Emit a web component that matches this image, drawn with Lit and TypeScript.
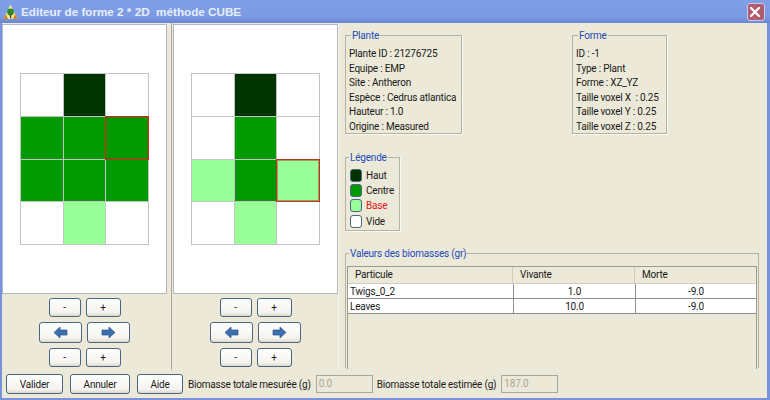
import { LitElement, html, css, svg } from 'lit';
import { customElement } from 'lit/decorators.js';

type Cell = 'w' | 'd' | 'g' | 'l';

const COLORS: Record<Cell, string> = { w: '#ffffff', d: '#003300', g: '#009900', l: '#99ff99' };

const LEFT_GRID: Cell[] = ['w', 'd', 'w', 'g', 'g', 'g', 'g', 'g', 'g', 'w', 'l', 'w'];
const RIGHT_GRID: Cell[] = ['w', 'd', 'w', 'w', 'g', 'w', 'l', 'g', 'l', 'w', 'l', 'w'];

const arrowLeft = svg`<polygon points="1,6.5 7,1 7,4 14,4 14,9 7,9 7,12" fill="#3d6fae" stroke="#2a5590" stroke-width="0.7"/>`;
const arrowRight = svg`<polygon points="14,6.5 8,1 8,4 1,4 1,9 8,9 8,12" fill="#3d6fae" stroke="#2a5590" stroke-width="0.7"/>`;

@customElement('app-root')
export class AppRoot extends LitElement {
  static styles = css`
    :host {
      display: block;
      width: 770px;
      height: 400px;
      overflow: hidden;
      font-family: Roboto, 'Liberation Sans', Arial, sans-serif;
      font-size: 10px;
      letter-spacing: -0.2px;
      color: #1a1a1a;
    }
    .window {
      display: flex;
      flex-direction: column;
      height: 400px;
      box-sizing: border-box;
      background: #7892dc;
      padding: 0 3px 2px 2px;
    }
    .titlebar {
      display: flex;
      align-items: center;
      height: 23px;
      flex: none;
      margin: 0 -3px 0 -2px;
      padding: 0 5px 0 3px;
      background: linear-gradient(#7f9fe6, #7d9be3 70%, #6a86d4);
      color: #e6edff;
      font-family: 'Liberation Sans', Arial, sans-serif;
      font-size: 11.7px;
      letter-spacing: 0;
      font-weight: bold;
      white-space: pre;
    }
    .titlebar svg {
      flex: none;
      margin-right: 3px;
    }
    .titlebar .title {
      flex: 1;
    }
    .close {
      display: flex;
      align-items: center;
      justify-content: center;
      width: 16px;
      height: 16px;
      background: #b25c6e;
      border: 1px solid #c5cdec;
      border-radius: 3px;
    }
    .content {
      flex: 1;
      display: flex;
      flex-direction: column;
      background: #ece9d8;
      min-height: 0;
    }
    .main {
      flex: 1;
      display: flex;
      min-height: 0;
    }
    .pane {
      width: 165px;
      flex: none;
      display: flex;
      flex-direction: column;
      align-items: center;
    }
    .divider {
      width: 4px;
      flex: none;
      margin-right: 1px;
      border-right: 1px solid #aca899;
    }
    .canvas {
      box-sizing: border-box;
      width: 165px;
      height: 270px;
      margin-top: 1px;
      background: #ffffff;
      border: 1px solid #b0b8c8;
      display: flex;
      align-items: center;
      justify-content: center;
      flex: none;
    }
    .grid {
      display: grid;
      grid-template-columns: 43px 42px 43px;
      grid-template-rows: 43px 43px 42px 43px;
      border-top: 1px solid #c4c4c4;
      border-left: 1px solid #c4c4c4;
    }
    .cell {
      box-sizing: border-box;
      border-right: 1px solid #c4c4c4;
      border-bottom: 1px solid #c4c4c4;
    }
    .cell.sel {
      position: relative;
    }
    .cell.sel::after {
      content: '';
      position: absolute;
      inset: -1px;
      border: 1px solid #b8381c;
      box-shadow: inset 0 0 0 1px rgba(160, 60, 20, 0.5);
      z-index: 1;
    }
    .controls {
      display: flex;
      flex-direction: column;
      align-items: center;
      gap: 5px;
      margin-top: 4px;
    }
    .row {
      display: flex;
      gap: 5px;
    }
    button {
      box-sizing: border-box;
      font: inherit;
      letter-spacing: inherit;
      color: #1a1a1a;
      padding: 0;
      border: 1px solid #4a6684;
      border-radius: 3px;
      background: linear-gradient(#ffffff, #f4f3ee 80%, #dcd8c8);
      display: flex;
      align-items: center;
      justify-content: center;
    }
    .small {
      height: 19px;
      width: 32px;
    }
    .small.wide {
      width: 35px;
    }
    .arrow {
      height: 21px;
      width: 43px;
    }
    .side {
      flex: 1;
      min-width: 0;
      box-sizing: border-box;
      padding: 6px 8px 0 6px;
      display: grid;
      grid-template-columns: 227px 95px 1fr;
      grid-template-rows: 105px auto auto;
      align-content: start;
      border-left: 1px solid #f7f5ec;
    }
    fieldset {
      margin: 0;
      padding: 0;
      border: 1px solid #b4b2a4;
      box-shadow: 1px 1px 0 #fbfaf4;
      min-width: 0;
      box-sizing: border-box;
    }
    legend {
      color: #2349b8;
      padding: 0 1px;
      margin-left: 3px;
      line-height: 13px;
    }
    .plante {
      width: 117px;
      height: 105px;
    }
    .plante legend,
    .forme legend {
      margin-left: 5px;
    }
    .forme {
      height: 105px;
    }
    .info {
      padding: 5px 0 0 3px;
      line-height: 14.5px;
      white-space: pre;
    }
    .legende {
      grid-column: 1;
      grid-row: 2;
      width: 55px;
      height: 80px;
      margin-top: 17px;
    }
    .legend-items {
      display: flex;
      flex-direction: column;
      gap: 3px;
      padding: 5px 0 0 4px;
    }
    .legend-item {
      display: flex;
      align-items: center;
      gap: 4px;
      height: 12.4px;
    }
    .swatch {
      box-sizing: border-box;
      width: 12px;
      height: 13px;
      border: 1px solid #4a6684;
      border-radius: 3px;
      flex: none;
    }
    .base {
      color: #e01818;
    }
    .valeurs {
      grid-column: 1 / -1;
      grid-row: 3;
      height: 121px;
      margin-top: 16px;
      border-bottom: none;
      box-shadow: none;
    }
    .table {
      margin: 6px 1px 0 1px;
      height: 102px;
      border-left: 1px solid #9a9a90;
      border-right: 1px solid #9a9a90;
      border-top: 1px solid #9a9a90;
    }
    .thead,
    .tr {
      display: grid;
      grid-template-columns: 165px 122px 1fr;
    }
    .thead {
      height: 17px;
      line-height: 16px;
      box-sizing: border-box;
      border-bottom: 1px solid #d0cdbc;
    }
    .th {
      padding-left: 7px;
      border-right: 1px solid #cfccbc;
    }
    .th:last-child {
      border-right: none;
    }
    .tr {
      height: 15px;
      line-height: 15px;
      background: #ffffff;
      box-sizing: border-box;
      border-bottom: 1px solid #8f8f8f;
    }
    .td {
      text-align: center;
      border-left: 1px solid #8f8f8f;
    }
    .td.first {
      text-align: left;
      border-left: none;
      padding-left: 2px;
    }
    .bottom {
      flex: none;
      height: 28px;
      display: flex;
      align-items: center;
      padding-left: 4px;
    }
    .bottom button {
      height: 20px;
      margin-right: 7px;
    }
    .field {
      box-sizing: border-box;
      width: 57px;
      height: 18px;
      line-height: 16px;
      padding-left: 2px;
      margin: 0 4px 0 5px;
      border: 1px solid #a8a8a0;
      color: #a8a698;
    }
  `;

  private renderGrid(cells: Cell[], selected: number) {
    return html`
      <div class="canvas">
        <div class="grid">
          ${cells.map(
            (c, i) =>
              html`<div class="cell ${i === selected ? 'sel' : ''}" style="background:${COLORS[c]}"></div>`,
          )}
        </div>
      </div>
    `;
  }

  private renderControls() {
    return html`
      <div class="controls">
        <div class="row">
          <button class="small">-</button>
          <button class="small wide">+</button>
        </div>
        <div class="row">
          <button class="arrow"><svg width="15" height="13">${arrowLeft}</svg></button>
          <button class="arrow"><svg width="15" height="13">${arrowRight}</svg></button>
        </div>
        <div class="row">
          <button class="small">-</button>
          <button class="small wide">+</button>
        </div>
      </div>
    `;
  }

  render() {
    return html`
      <div class="window">
        <div class="titlebar">
          <svg width="15" height="16" viewBox="0 0 15 16">
            <polygon points="7.5,0.5 14.5,15 0.5,15" fill="#f4ec9c" />
            <polygon points="0.5,15 3,10 5,15" fill="#d8801c" />
            <polygon points="14.5,15 12,10 10,15" fill="#d8801c" />
            <circle cx="7.5" cy="8" r="3.4" fill="#2c8a2c" />
            <rect x="6.9" y="10.5" width="1.4" height="4" fill="#5a4a20" />
          </svg>
          <span class="title">Editeur de forme 2 * 2D  méthode CUBE</span>
          <div class="close">
            <svg width="12" height="12" viewBox="0 0 12 12">
              <path d="M2 2 L10 10 M10 2 L2 10" stroke="#ffffff" stroke-width="2.2" stroke-linecap="round" />
            </svg>
          </div>
        </div>
        <div class="content">
          <div class="main">
            <div class="pane">${this.renderGrid(LEFT_GRID, 5)}${this.renderControls()}</div>
            <div class="divider"></div>
            <div class="pane">${this.renderGrid(RIGHT_GRID, 8)}${this.renderControls()}</div>
            <div class="side">
              <fieldset class="plante">
                <legend>Plante</legend>
                <div class="info">Plante ID : 21276725
Equipe : EMP
Site : Antheron
Espèce : Cedrus atlantica
Hauteur : 1.0
Origine : Measured</div>
              </fieldset>
              <fieldset class="forme">
                <legend>Forme</legend>
                <div class="info">ID : -1
Type : Plant
Forme : XZ_YZ
Taille voxel X  : 0.25
Taille voxel Y : 0.25
Taille voxel Z : 0.25</div>
              </fieldset>
              <fieldset class="legende">
                <legend>Légende</legend>
                <div class="legend-items">
                  <div class="legend-item"><span class="swatch" style="background:${COLORS.d}"></span>Haut</div>
                  <div class="legend-item"><span class="swatch" style="background:${COLORS.g}"></span>Centre</div>
                  <div class="legend-item base"><span class="swatch" style="background:${COLORS.l}"></span>Base</div>
                  <div class="legend-item"><span class="swatch" style="background:${COLORS.w}"></span>Vide</div>
                </div>
              </fieldset>
              <fieldset class="valeurs">
                <legend>Valeurs des biomasses (gr)</legend>
                <div class="table">
                  <div class="thead">
                    <div class="th">Particule</div>
                    <div class="th">Vivante</div>
                    <div class="th">Morte</div>
                  </div>
                  <div class="tr">
                    <div class="td first">Twigs_0_2</div>
                    <div class="td">1.0</div>
                    <div class="td">-9.0</div>
                  </div>
                  <div class="tr">
                    <div class="td first">Leaves</div>
                    <div class="td">10.0</div>
                    <div class="td">-9.0</div>
                  </div>
                </div>
              </fieldset>
            </div>
          </div>
          <div class="bottom">
            <button style="width:57px">Valider</button>
            <button style="width:60px">Annuler</button>
            <button style="width:46px;margin-right:5px">Aide</button>
            <span>Biomasse totale mesurée (g)</span>
            <div class="field">0.0</div>
            <span>Biomasse totale estimée (g)</span>
            <div class="field">187.0</div>
          </div>
        </div>
      </div>
    `;
  }
}
